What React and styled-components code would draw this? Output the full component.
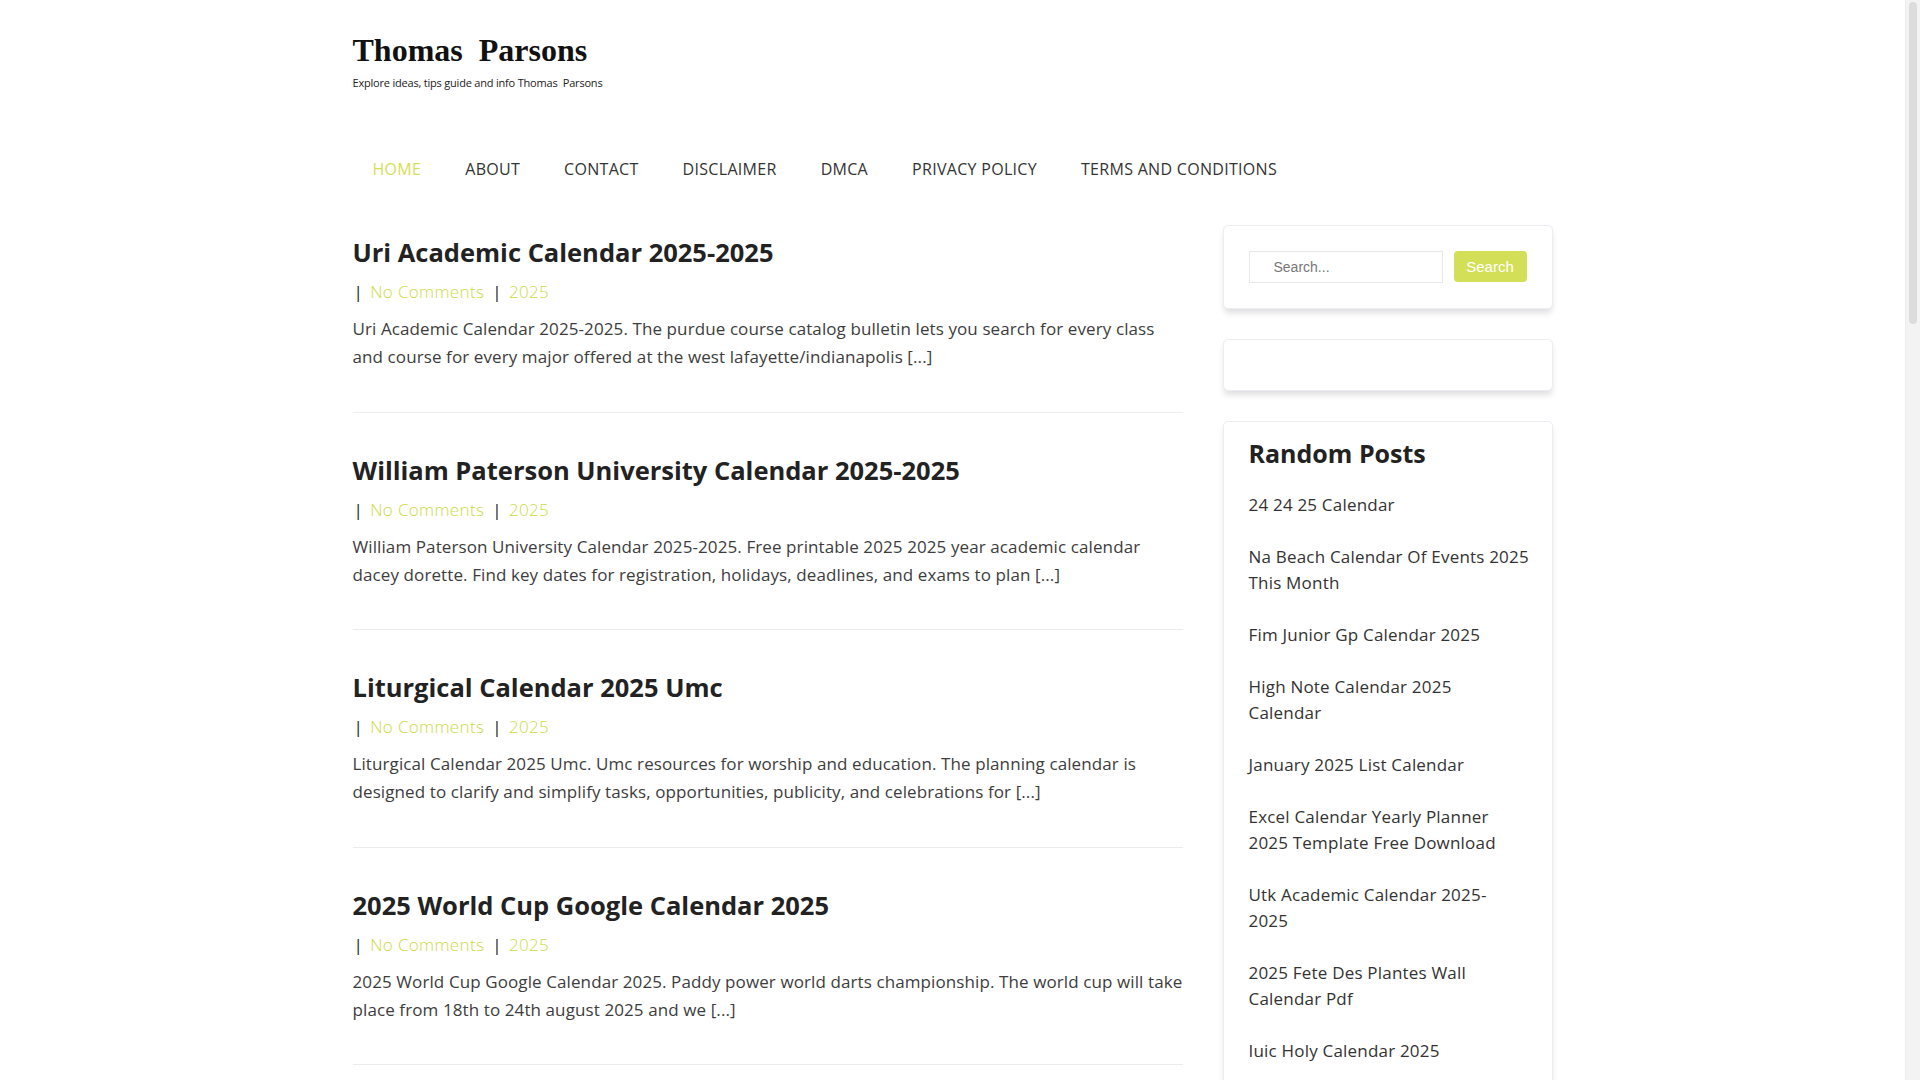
import styled, { createGlobalStyle } from "styled-components";

const GlobalStyle = createGlobalStyle`
    body {
        margin: 0;
        background: #fff;
        font-family: "Open Sans", "Liberation Sans", sans-serif;
        color: #333;
    }
    * {
        box-sizing: border-box;
    }
`;

const ACCENT = "#d4df58";

// leaves room for the browser scrollbar seen in the screenshot
const Shell = styled.div`
    padding-right: 15px;
`;

const ScrollTrack = styled.div`
    position: fixed;
    top: 0;
    right: 0;
    width: 15px;
    height: 100vh;
    background: #f3f3f3;
    border-left: 1px solid #ececec;
`;

const ScrollThumb = styled.div`
    margin: 2px 3px 0 3px;
    height: 322px;
    border-radius: 5px;
    background: #dcdcdc;
`;

const Page = styled.div`
    width: 1200px;
    margin: 0 auto;
`;

const Header = styled.header`
    padding-top: 30px;
`;

const SiteTitle = styled.h1`
    margin: 0;
    font-family: "Liberation Serif", "DejaVu Serif", serif;
    font-size: 32px;
    line-height: 40px;
    font-weight: 700;
    color: #111;
    white-space: pre;
`;

const Tagline = styled.p`
    margin: 3px 0 0;
    font-size: 11px;
    line-height: 20px;
    letter-spacing: -0.2px;
    color: #222;
    white-space: pre;
`;

const Nav = styled.nav`
    display: flex;
    align-items: center;
    height: 50px;
    margin: 51px 0 0 -2px;
`;

const NavLink = styled.a`
    padding: 0 22px;
    font-size: 16px;
    letter-spacing: 0.3px;
    text-transform: uppercase;
    color: ${(p) => (p.$active ? ACCENT : "#333")};
    text-decoration: none;
    cursor: pointer;
`;

const Layout = styled.div`
    display: grid;
    grid-template-columns: 1fr 330px;
    gap: 40px;
    margin-top: 31px;
    align-items: start;
`;

const Main = styled.main`
    display: flex;
    flex-direction: column;
`;

const Article = styled.article`
    padding: 40px 0 40.5px;
    border-bottom: 1px solid #ebebf0;

    &:first-child {
        padding-top: 10px;
    }
`;

const PostTitle = styled.h2`
    margin: 0;
    font-size: 25.5px;
    line-height: 34px;
    font-weight: 700;
    color: #222;
`;

const Meta = styled.div`
    margin-top: 9px;
    font-size: 17px;
    line-height: 28px;
    font-weight: 300;
    letter-spacing: 0.35px;
    color: #ccda42;
`;

const Sep = styled.span`
    display: inline-block;
    margin: 0 7px 0 ${(p) => (p.$first ? "1px" : "8px")};
    color: #222;
    font-weight: 400;
`;

const MetaLink = styled.a`
    color: inherit;
    text-decoration: none;
`;

const Excerpt = styled.p`
    margin: 9px 0 0;
    font-size: 17px;
    line-height: 28px;
    letter-spacing: 0.1px;
    color: #3d3d3d;
`;

const Sidebar = styled.aside`
    display: flex;
    flex-direction: column;
    gap: 30px;
`;

const Widget = styled.section`
    border: 1px solid #ececf2;
    border-radius: 5px;
    background: #fff;
    box-shadow: 0 5px 6px -1px rgba(0, 0, 0, 0.13);
    padding: ${(p) => p.$pad || "25px"};
    min-height: ${(p) => p.$min || "auto"};
`;

const SearchForm = styled.form`
    display: flex;
    align-items: flex-start;
    gap: 11px;
`;

const SearchInput = styled.input`
    width: 194px;
    height: 32px;
    border: 1px solid #e8e8e8;
    padding: 0 0 0 24px;
    font-family: "Liberation Sans", Arial, sans-serif;
    font-size: 14px;
    color: #333;
    outline: none;

    &::placeholder {
        color: #777;
    }
`;

const SearchButton = styled.button`
    width: 73px;
    height: 31px;
    border: none;
    border-radius: 4px;
    background: ${ACCENT};
    color: #fff;
    font-family: "Liberation Sans", Arial, sans-serif;
    font-size: 15px;
    cursor: pointer;
`;

const WidgetTitle = styled.h3`
    margin: 0;
    font-size: 25px;
    line-height: 34px;
    font-weight: 700;
    color: #222;
`;

const PostList = styled.ul`
    list-style: none;
    margin: 22px 0 0;
    padding: 0;
`;

const PostItem = styled.li`
    margin-bottom: 26px;
    font-size: 17px;
    line-height: 26px;
    letter-spacing: 0.2px;
    color: #333;
    white-space: nowrap;
`;

const navItems = [
    "Home",
    "About",
    "Contact",
    "Disclaimer",
    "DMCA",
    "Privacy Policy",
    "Terms and Conditions",
];

const posts = [
    {
        title: "Uri Academic Calendar 2025-2025",
        excerpt:
            "Uri Academic Calendar 2025-2025. The purdue course catalog bulletin lets you search for every class and course for every major offered at the west lafayette/indianapolis [...]",
    },
    {
        title: "William Paterson University Calendar 2025-2025",
        excerpt:
            "William Paterson University Calendar 2025-2025. Free printable 2025 2025 year academic calendar dacey dorette. Find key dates for registration, holidays, deadlines, and exams to plan [...]",
    },
    {
        title: "Liturgical Calendar 2025 Umc",
        excerpt:
            "Liturgical Calendar 2025 Umc. Umc resources for worship and education. The planning calendar is designed to clarify and simplify tasks, opportunities, publicity, and celebrations for [...]",
    },
    {
        title: "2025 World Cup Google Calendar 2025",
        excerpt:
            "2025 World Cup Google Calendar 2025. Paddy power world darts championship. The world cup will take place from 18th to 24th august 2025 and we [...]",
    },
];

const randomPosts = [
    ["24 24 25 Calendar"],
    ["Na Beach Calendar Of Events 2025", "This Month"],
    ["Fim Junior Gp Calendar 2025"],
    ["High Note Calendar 2025", "Calendar"],
    ["January 2025 List Calendar"],
    ["Excel Calendar Yearly Planner", "2025 Template Free Download"],
    ["Utk Academic Calendar 2025-", "2025"],
    ["2025 Fete Des Plantes Wall", "Calendar Pdf"],
    ["Iuic Holy Calendar 2025"],
];

const App = () => {
    return (
        <Shell>
            <GlobalStyle />
            <Page>
                <Header>
                    <SiteTitle>Thomas  Parsons</SiteTitle>
                    <Tagline>Explore ideas, tips guide and info Thomas  Parsons</Tagline>
                    <Nav>
                        {navItems.map((item, i) => (
                            <NavLink key={item} $active={i === 0}>
                                {item}
                            </NavLink>
                        ))}
                    </Nav>
                </Header>
                <Layout>
                    <Main>
                        {posts.map((post) => (
                            <Article key={post.title}>
                                <PostTitle>{post.title}</PostTitle>
                                <Meta>
                                    <Sep $first>|</Sep>
                                    <MetaLink>No Comments</MetaLink>
                                    <Sep>|</Sep>
                                    <MetaLink>2025</MetaLink>
                                </Meta>
                                <Excerpt>{post.excerpt}</Excerpt>
                            </Article>
                        ))}
                    </Main>
                    <Sidebar>
                        <Widget>
                            <SearchForm onSubmit={(e) => e.preventDefault()}>
                                <SearchInput placeholder="Search..." />
                                <SearchButton>Search</SearchButton>
                            </SearchForm>
                        </Widget>
                        <Widget $min="52px" />
                        <Widget $pad="14px 25px 0">
                            <WidgetTitle>Random Posts</WidgetTitle>
                            <PostList>
                                {randomPosts.map((lines) => (
                                    <PostItem key={lines.join(" ")}>
                                        {lines.map((line, i) => (
                                            <span key={line}>
                                                {i > 0 && <br />}
                                                {line}
                                            </span>
                                        ))}
                                    </PostItem>
                                ))}
                            </PostList>
                        </Widget>
                    </Sidebar>
                </Layout>
            </Page>
            <ScrollTrack>
                <ScrollThumb />
            </ScrollTrack>
        </Shell>
    );
};

export default App;
